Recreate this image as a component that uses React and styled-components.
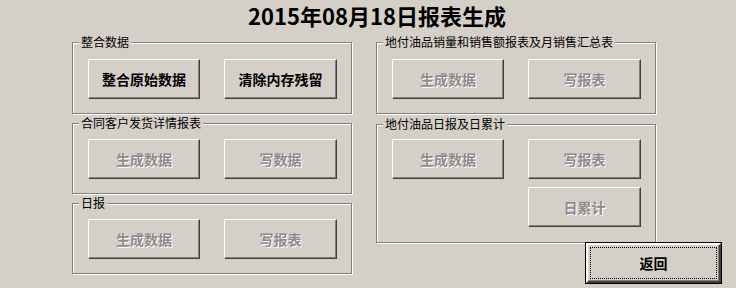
import React from "react";
import styled, { createGlobalStyle } from "styled-components";

const Global = createGlobalStyle`
  html, body { margin: 0; padding: 0; background: #d4d0c8; }
  body { font-family: "Noto Sans CJK SC", "Noto Sans", sans-serif; color: #000; }
`;

const Page = styled.div`
  width: 736px;
  height: 288px;
  background: #d4d0c8;
  overflow: hidden;
  box-sizing: border-box;
`;

const Title = styled.h1`
  margin: 0;
  padding: 2px 0 0 18px;
  height: 42px;
  box-sizing: border-box;
  text-align: center;
  font-size: 22px;
  line-height: 26px;
  font-weight: 700;
`;

const Columns = styled.div`
  display: flex;
  gap: 24px;
  padding-left: 72px;
  align-items: flex-start;
`;

const Column = styled.div`
  display: flex;
  flex-direction: column;
  gap: ${(p) => p.$gap}px;
  width: ${(p) => p.$width}px;
`;

const Group = styled.div`
  position: relative;
  border: 1px solid #808080;
  box-shadow: inset 1px 1px 0 #fff, 1px 1px 0 #fff;
  padding: ${(p) => p.$padTop}px 14px 14px 15px;
  height: ${(p) => p.$height}px;
  box-sizing: border-box;
`;

const Legend = styled.span`
  position: absolute;
  left: 6px;
  top: -9px;
  padding: 0 2px;
  background: #d4d0c8;
  font-size: 12px;
  line-height: 16px;
  white-space: nowrap;
`;

const ButtonGrid = styled.div`
  display: grid;
  grid-template-columns: 112px 113px;
  column-gap: 24px;
  row-gap: 8px;
`;

const Btn = styled.button`
  grid-column: ${(p) => p.$col || "auto"};
  position: relative;
  height: 40px;
  width: ${(p) => p.$width || "auto"};
  margin: 0;
  padding: 0;
  background: #d4d0c8;
  border: 1px solid;
  border-color: #fff #404040 #404040 #fff;
  box-shadow: inset -1px -1px 0 #808080;
  font-family: "Noto Sans CJK SC", "Noto Sans", sans-serif;
  font-size: 14px;
  font-weight: 700;
  color: #000;
  cursor: default;
  &:disabled {
    color: #8c8c8c;
    text-shadow: 1px 1px 0 #fff;
  }
`;

const DefaultBtn = styled(Btn)`
  outline: 1px solid #000;
  outline-offset: 0;
  border: 2px solid;
  border-color: #fff #404040 #404040 #fff;
  &::after {
    content: "";
    position: absolute;
    inset: 2px;
    border: 1px dotted #000;
  }
`;

const Footer = styled.div`
  margin-top: -10px;
  padding-left: 210px;
`;

export default function App() {
  return (
    <Page>
      <Global />
      <Title>2015年08月18日报表生成</Title>
      <Columns>
        <Column $width={280} $gap={9}>
          <Group $height={72} $padTop={16}>
            <Legend>整合数据</Legend>
            <ButtonGrid>
              <Btn>整合原始数据</Btn>
              <Btn>清除内存残留</Btn>
            </ButtonGrid>
          </Group>
          <Group $height={71} $padTop={15}>
            <Legend>合同客户发货详情报表</Legend>
            <ButtonGrid>
              <Btn disabled>生成数据</Btn>
              <Btn disabled>写数据</Btn>
            </ButtonGrid>
          </Group>
          <Group $height={71} $padTop={15}>
            <Legend>日报</Legend>
            <ButtonGrid>
              <Btn disabled>生成数据</Btn>
              <Btn disabled>写报表</Btn>
            </ButtonGrid>
          </Group>
        </Column>
        <Column $width={280} $gap={10}>
          <Group $height={72} $padTop={16}>
            <Legend>地付油品销量和销售额报表及月销售汇总表</Legend>
            <ButtonGrid>
              <Btn disabled>生成数据</Btn>
              <Btn disabled>写报表</Btn>
            </ButtonGrid>
          </Group>
          <Group $height={119} $padTop={14}>
            <Legend>地付油品日报及日累计</Legend>
            <ButtonGrid>
              <Btn disabled>生成数据</Btn>
              <Btn disabled>写报表</Btn>
              <Btn disabled $col={2}>日累计</Btn>
            </ButtonGrid>
          </Group>
          <Footer>
            <DefaultBtn $width="135px">返回</DefaultBtn>
          </Footer>
        </Column>
      </Columns>
    </Page>
  );
}
